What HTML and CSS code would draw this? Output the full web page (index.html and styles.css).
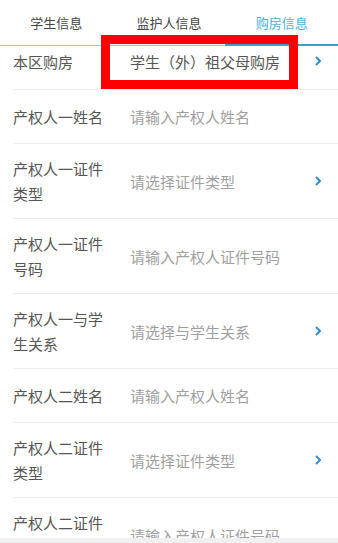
FILE: index.html
```html
<!DOCTYPE html>
<html>

<head>
    <meta name="viewport" content="width=device-width, initial-scale=1">
    <link rel="stylesheet" href="styles.css">
</head>

<body>
    <div class="tabs">
        <div class="tab">学生信息</div>
        <div class="tab">监护人信息</div>
        <div class="tab active">购房信息</div>
    </div>

    <div class="form-list">
        <div class="row">
            <div class="label">本区购房</div>
            <div class="value filled">学生（外）祖父母购房</div>
            <svg class="arrow" viewBox="0 0 8 12"><polyline points="2,2 6,6 2,10"/></svg>
        </div>
        <div class="row">
            <div class="label">产权人一姓名</div>
            <div class="value">请输入产权人姓名</div>
        </div>
        <div class="row">
            <div class="label">产权人一证件类型</div>
            <div class="value">请选择证件类型</div>
            <svg class="arrow" viewBox="0 0 8 12"><polyline points="2,2 6,6 2,10"/></svg>
        </div>
        <div class="row">
            <div class="label">产权人一证件号码</div>
            <div class="value">请输入产权人证件号码</div>
        </div>
        <div class="row">
            <div class="label">产权人一与学生关系</div>
            <div class="value">请选择与学生关系</div>
            <svg class="arrow" viewBox="0 0 8 12"><polyline points="2,2 6,6 2,10"/></svg>
        </div>
        <div class="row">
            <div class="label">产权人二姓名</div>
            <div class="value">请输入产权人姓名</div>
        </div>
        <div class="row">
            <div class="label">产权人二证件类型</div>
            <div class="value">请选择证件类型</div>
            <svg class="arrow" viewBox="0 0 8 12"><polyline points="2,2 6,6 2,10"/></svg>
        </div>
        <div class="row">
            <div class="label">产权人二证件号码</div>
            <div class="value">请输入产权人证件号码</div>
        </div>
    </div>

    <div class="mark"></div>
    <div class="footer"></div>
</body>

</html>
```

FILE: styles.css
```css
body {
    margin: 0;
    font-family: "Noto Sans CJK SC", "Liberation Sans", sans-serif;
    background-color: #fff;
}

.tabs {
    position: fixed;
    z-index: 2;
    top: 0;
    left: 0;
    right: 0;
    display: flex;
    height: 45px;
    background-color: #fff;
    border-bottom: 1px solid #8fcbe5;
}

.tab {
    flex: 1;
    position: relative;
    text-align: center;
    line-height: 45px;
    font-size: 13px;
    color: #444;
}

.tab.active {
    color: #4cb2dc;
}

.tab.active::after {
    content: "";
    position: absolute;
    left: 0;
    right: 0;
    bottom: -1px;
    height: 2px;
    background-color: #3d9fcd;
}

.form-list {
    padding-top: 33px;
}

.row {
    display: flex;
    align-items: center;
    min-height: 54px;
    margin-left: 13px;
    padding: 12px 0;
    box-sizing: border-box;
    border-bottom: 1px solid #eeeeee;
    font-size: 15px;
    line-height: 25px;
}

.row:first-child {
    min-height: 57px;
}

.label {
    width: 100px;
    margin-right: 17px;
    color: #555;
}

.value {
    flex: 1;
    color: #a0a0a0;
}

.value.filled {
    color: #555;
}

.arrow {
    width: 8px;
    height: 12px;
    margin-right: 16px;
}

.arrow polyline {
    fill: none;
    stroke: #2f8dc6;
    stroke-width: 2;
}

.mark {
    position: absolute;
    z-index: 3;
    left: 101px;
    top: 35px;
    width: 197px;
    height: 54px;
    box-sizing: border-box;
    border: 9px solid #ff0000;
}

.footer {
    position: fixed;
    z-index: 2;
    left: 0;
    right: 0;
    bottom: 0;
    height: 5px;
    background-color: #f0f0f0;
}
```
